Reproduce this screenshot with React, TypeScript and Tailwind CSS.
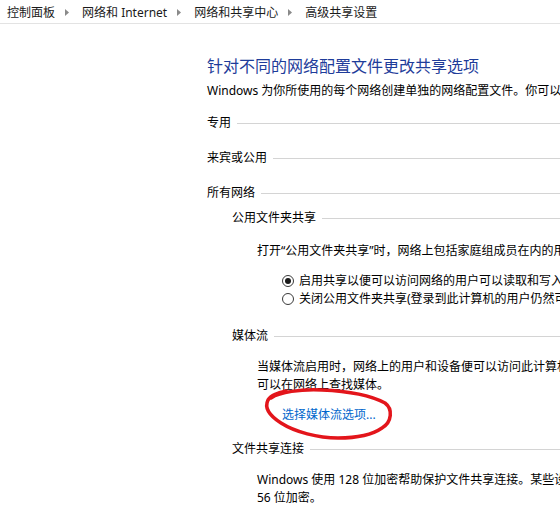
import React from "react";

const font = { fontFamily: '"Segoe UI", "Noto Sans", "Noto Sans CJK SC", sans-serif' };

function Arrow() {
  return (
    <svg width="4" height="7" viewBox="0 0 4 7" className="ml-[10px] mr-[13px] shrink-0">
      <path d="M0 0 L4 3.5 L0 7 Z" fill="#8a8a8a" />
    </svg>
  );
}

function Header({ children, className = "" }: { children: React.ReactNode; className?: string }) {
  return (
    <div className={`flex items-center h-[18px] leading-[18px] ${className}`}>
      <span className="whitespace-nowrap shrink-0">{children}</span>
      <div className="flex-1 h-px bg-[#d4d4d4] ml-[6px] mt-[1px]" />
    </div>
  );
}

function Radio({ checked }: { checked?: boolean }) {
  return (
    <span className="w-[12px] h-[12px] rounded-full border border-[#3a3a3a] bg-white flex items-center justify-center shrink-0">
      {checked && <span className="w-[6px] h-[6px] rounded-full bg-[#1a1a1a]" />}
    </span>
  );
}

export default function App() {
  return (
    <div className="relative w-[560px] h-[514px] overflow-hidden bg-white text-[12px] text-black" style={font}>
      {/* breadcrumb */}
      <div className="flex items-center h-[23px] pt-[2px] pl-[7px] whitespace-nowrap text-[#1a1a1a] leading-[18px]">
        <span>控制面板</span>
        <Arrow />
        <span>网络和 Internet</span>
        <Arrow />
        <span>网络和共享中心</span>
        <Arrow />
        <span>高级共享设置</span>
      </div>
      <div className="h-px bg-[#e3e3e3]" />

      <div className="pl-[207px]">
        <div className="mt-[31px] h-[22px] leading-[22px] text-[16px] text-[#1e3c9a] whitespace-nowrap">
          针对不同的网络配置文件更改共享选项
        </div>
        <div className="mt-[5px] h-[18px] leading-[18px] whitespace-nowrap">
          Windows 为你所使用的每个网络创建单独的网络配置文件。你可以针对每个配置文件选择特定的选项。
        </div>

        <Header className="mt-[14px]">专用</Header>
        <Header className="mt-[17px]">来宾或公用</Header>
        <Header className="mt-[17px]">所有网络</Header>

        <div className="pl-[25px]">
          <Header className="mt-[7px]">公用文件夹共享</Header>
          <div className="pl-[25px]">
            <div className="mt-[15px] h-[18px] leading-[18px] whitespace-nowrap">
              打开“公用文件夹共享”时，网络上包括家庭组成员在内的用户都可以访问公用文件夹中的文件。
            </div>
            <div className="mt-[12px] pl-[25px] flex flex-col">
              <div className="flex items-center h-[18px] leading-[18px] whitespace-nowrap gap-[5px]">
                <Radio checked />
                <span>启用共享以便可以访问网络的用户可以读取和写入公用文件夹中的文件</span>
              </div>
              <div className="flex items-center h-[18px] leading-[18px] whitespace-nowrap gap-[5px]">
                <Radio />
                <span>关闭公用文件夹共享(登录到此计算机的用户仍然可以访问这些文件夹)</span>
              </div>
            </div>
          </div>

          <Header className="mt-[19px]">媒体流</Header>
          <div className="pl-[25px]">
            <div className="mt-[13px] leading-[18px] whitespace-nowrap">
              <div className="h-[18px]">当媒体流启用时，网络上的用户和设备便可以访问此计算机上的图片、音乐以及视频。</div>
              <div className="h-[18px]">可以在网络上查找媒体。</div>
            </div>
            <div className="mt-[12px] pl-[25px] h-[18px] leading-[18px] text-[#0066cc] whitespace-nowrap">
              选择媒体流选项...
            </div>
          </div>

          <Header className="mt-[16px]">文件共享连接</Header>
          <div className="pl-[25px]">
            <div className="mt-[13px] leading-[18px] whitespace-nowrap">
              <div className="h-[18px]">Windows 使用 128 位加密帮助保护文件共享连接。某些设备不支持 128 位加密，必须使用 40 或</div>
              <div className="h-[18px]">56 位加密。</div>
            </div>
          </div>
        </div>
      </div>

      {/* hand-drawn red annotation */}
      <svg className="absolute inset-0 pointer-events-none" width="560" height="514" viewBox="0 0 560 514">
        <path
          d="M 271 398 C 280 392, 300 389, 322 390 C 345 391, 370 395, 385 403 C 393 409, 392 422, 382 428 C 372 435, 355 438, 338 438 C 318 438, 295 432, 281 423 C 270 416, 264 408, 268 400 C 271 395, 278 393, 286 391"
          fill="none"
          stroke="#e3151b"
          strokeWidth="3.5"
          strokeLinecap="round"
          strokeLinejoin="round"
        />
      </svg>
    </div>
  );
}
